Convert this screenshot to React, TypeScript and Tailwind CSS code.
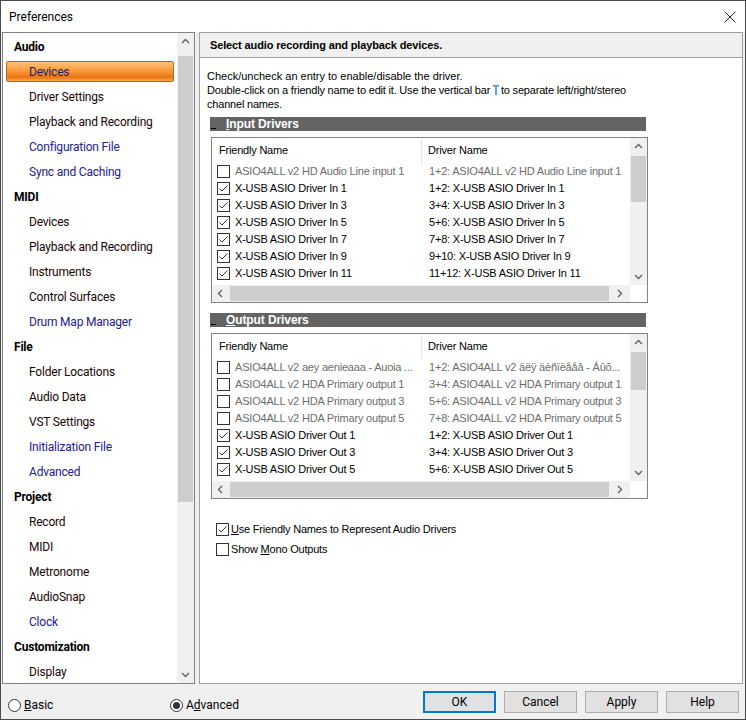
import React from 'react';

type TreeItem = { t: string; h?: boolean; sel?: boolean; blue?: boolean };
type Row = { c: boolean; g?: boolean; f: string; d: string };

const tree: TreeItem[] = [
  { t: 'Audio', h: true },
  { t: 'Devices', sel: true },
  { t: 'Driver Settings' },
  { t: 'Playback and Recording' },
  { t: 'Configuration File', blue: true },
  { t: 'Sync and Caching', blue: true },
  { t: 'MIDI', h: true },
  { t: 'Devices' },
  { t: 'Playback and Recording' },
  { t: 'Instruments' },
  { t: 'Control Surfaces' },
  { t: 'Drum Map Manager', blue: true },
  { t: 'File', h: true },
  { t: 'Folder Locations' },
  { t: 'Audio Data' },
  { t: 'VST Settings' },
  { t: 'Initialization File', blue: true },
  { t: 'Advanced', blue: true },
  { t: 'Project', h: true },
  { t: 'Record' },
  { t: 'MIDI' },
  { t: 'Metronome' },
  { t: 'AudioSnap' },
  { t: 'Clock', blue: true },
  { t: 'Customization', h: true },
  { t: 'Display' },
];

const inputRows: Row[] = [
  { c: false, g: true, f: 'ASIO4ALL v2 HD Audio Line input 1', d: '1+2: ASIO4ALL v2 HD Audio Line input 1' },
  { c: true, f: 'X-USB ASIO Driver In 1', d: '1+2: X-USB ASIO Driver In 1' },
  { c: true, f: 'X-USB ASIO Driver In 3', d: '3+4: X-USB ASIO Driver In 3' },
  { c: true, f: 'X-USB ASIO Driver In 5', d: '5+6: X-USB ASIO Driver In 5' },
  { c: true, f: 'X-USB ASIO Driver In 7', d: '7+8: X-USB ASIO Driver In 7' },
  { c: true, f: 'X-USB ASIO Driver In 9', d: '9+10: X-USB ASIO Driver In 9' },
  { c: true, f: 'X-USB ASIO Driver In 11', d: '11+12: X-USB ASIO Driver In 11' },
];

const outputRows: Row[] = [
  { c: false, g: true, f: 'ASIO4ALL v2 aey aenieaaa - Auoia ...', d: '1+2: ASIO4ALL v2 äëÿ äèñïëååâ - Âûõ...' },
  { c: false, g: true, f: 'ASIO4ALL v2 HDA Primary output 1', d: '3+4: ASIO4ALL v2 HDA Primary output 1' },
  { c: false, g: true, f: 'ASIO4ALL v2 HDA Primary output 3', d: '5+6: ASIO4ALL v2 HDA Primary output 3' },
  { c: false, g: true, f: 'ASIO4ALL v2 HDA Primary output 5', d: '7+8: ASIO4ALL v2 HDA Primary output 5' },
  { c: true, f: 'X-USB ASIO Driver Out 1', d: '1+2: X-USB ASIO Driver Out 1' },
  { c: true, f: 'X-USB ASIO Driver Out 3', d: '3+4: X-USB ASIO Driver Out 3' },
  { c: true, f: 'X-USB ASIO Driver Out 5', d: '5+6: X-USB ASIO Driver Out 5' },
];

const Chevron = ({ dir }: { dir: 'up' | 'down' | 'left' | 'right' }) => {
  const pts = {
    up: '1,6 4.5,2.5 8,6',
    down: '1,3 4.5,6.5 8,3',
    left: '6,1 2.5,4.5 6,8',
    right: '3,1 6.5,4.5 3,8',
  }[dir];
  return (
    <svg width="9" height="9" viewBox="0 0 9 9">
      <polyline points={pts} fill="none" stroke="#606060" strokeWidth="1.3" />
    </svg>
  );
};

const Check = ({ on }: { on: boolean }) => (
  <span className="w-[13px] h-[13px] border border-[#333333] bg-white flex items-center justify-center shrink-0">
    {on && (
      <svg width="11" height="11" viewBox="0 0 11 11">
        <polyline points="1.5,5.5 4,8 9.5,2.5" fill="none" stroke="#333333" strokeWidth="1" />
      </svg>
    )}
  </span>
);

const Radio = ({ on }: { on: boolean }) => (
  <span className="w-[13px] h-[13px] rounded-full border border-[#333333] bg-white flex items-center justify-center shrink-0">
    {on && <span className="w-[7px] h-[7px] rounded-full bg-[#333333]" />}
  </span>
);

const SectionBar = ({ first, rest }: { first: string; rest: string }) => (
  <div className="ml-[10px] w-[436px] h-[14px] bg-[#646464] flex items-end shrink-0">
    <span className="w-[5px] h-[1px] bg-black mb-[2px] ml-[1px]" />
    <span className="ml-[10px] self-center text-white font-bold text-[12px] leading-[14px] tracking-[-0.1px]">
      <span className="underline underline-offset-[1px]">{first}</span>
      {rest}
    </span>
  </div>
);

const DriverList = ({ rows, thumbH }: { rows: Row[]; thumbH: number }) => (
  <div className="ml-[11px] w-[437px] h-[166px] border border-[#828282] bg-white flex flex-col shrink-0 tracking-[-0.2px]">
    <div className="flex h-[147px]">
      <div className="w-[418px] flex flex-col overflow-hidden">
        <div className="h-[25px] flex items-center shrink-0">
          <div className="w-[210px] pl-[7px] h-[24px] border-r border-[#e5e5e5] flex items-center">Friendly Name</div>
          <div className="pl-[6px]">Driver Name</div>
        </div>
        {rows.map((r, i) => (
          <div key={i} className="h-[17px] flex items-center shrink-0">
            <div className="w-[210px] pl-[5px] flex items-center gap-[5px] overflow-hidden whitespace-nowrap">
              <Check on={r.c} />
              <span className={r.g ? 'text-[#6d6d6d]' : 'text-black'}>{r.f}</span>
            </div>
            <div className={`pl-[7px] whitespace-nowrap ${r.g ? 'text-[#6d6d6d]' : 'text-black'}`}>{r.d}</div>
          </div>
        ))}
      </div>
      <div className="w-[17px] bg-[#f0f0f0] flex flex-col items-center">
        <div className="h-[17px] flex items-center justify-center"><Chevron dir="up" /></div>
        <div className="mt-[1px] w-[15px] bg-[#cdcdcd]" style={{ height: thumbH }} />
        <div className="flex-1" />
        <div className="h-[17px] flex items-center justify-center"><Chevron dir="down" /></div>
      </div>
    </div>
    <div className="flex h-[17px]">
      <div className="w-[418px] bg-[#f0f0f0] flex items-center">
        <div className="w-[17px] flex items-center justify-center"><Chevron dir="left" /></div>
        <div className="ml-[1px] w-[379px] h-[15px] bg-[#cdcdcd]" />
        <div className="flex-1 flex items-center justify-center"><Chevron dir="right" /></div>
      </div>
      <div className="w-[17px] bg-white" />
    </div>
  </div>
);

const App: React.FC = () => {
  return (
    <div className="w-[746px] h-[720px] bg-[#f0f0f0] border border-[#4a4a4a] flex flex-col overflow-hidden font-['Liberation_Sans',Arial,sans-serif] text-[11px] text-black">
      {/* Title bar */}
      <div className="h-[31px] bg-white flex items-center justify-between pl-[8px] pr-[9px] shrink-0">
        <span className="font-['Roboto',sans-serif] text-[12px]">Preferences</span>
        <svg width="12" height="12" viewBox="0 0 12 12">
          <path d="M0.5 0.5 L11.5 11.5 M11.5 0.5 L0.5 11.5" stroke="#222" strokeWidth="1" />
        </svg>
      </div>

      {/* Main */}
      <div className="flex h-[652px] pl-[1px] shrink-0">
        {/* Tree */}
        <div className="w-[193px] h-full border border-[#828282] bg-white flex">
          <div className="w-[174px] pt-[1px] overflow-hidden font-['Roboto',sans-serif] text-[12px] tracking-[-0.2px]">
            {tree.map((it, i) =>
              it.h ? (
                <div key={i} className="h-[25px] flex items-center pl-[11px] font-bold">{it.t}</div>
              ) : it.sel ? (
                <div key={i} className="h-[25px] pt-[2px] px-[3px]">
                  <div className="h-[21px] rounded-[2px] border border-[#b06a26] bg-[linear-gradient(to_bottom,#fcc17c,#f99a3c_45%,#ec7414_80%,#ffa64a)] flex items-center pl-[22px] text-[#1e1e70]">
                    {it.t}
                  </div>
                </div>
              ) : (
                <div key={i} className={`h-[25px] flex items-center pl-[26px] ${it.blue ? 'text-[#22208c]' : 'text-[#1a0505]'}`}>{it.t}</div>
              )
            )}
          </div>
          <div className="w-[17px] bg-[#f0f0f0] flex flex-col items-center">
            <div className="h-[17px] flex items-center justify-center"><Chevron dir="up" /></div>
            <div className="mt-[6px] w-[15px] h-[446px] bg-[#cdcdcd]" />
            <div className="flex-1" />
            <div className="h-[17px] flex items-center justify-center"><Chevron dir="down" /></div>
          </div>
        </div>

        {/* Right panel */}
        <div className="ml-[4px] w-[544px] h-full border border-[#a0a0a0] bg-white flex flex-col">
          <div className="h-[25px] bg-[#f0f0f0] border-b border-[#a0a0a0] flex items-center pl-[10px] font-bold tracking-[-0.13px] shrink-0">
            Select audio recording and playback devices.
          </div>
          <div className="mt-[11px] pl-[7px] leading-[14px]">
            <div>Check/uncheck an entry to enable/disable the driver.</div>
            <div className="flex items-center whitespace-nowrap tracking-[-0.2px]">
              Double-click on a friendly name to edit it. Use the vertical bar&nbsp;
              <svg width="6" height="10" viewBox="0 0 6 10" className="mr-[2px]">
                <rect x="0" y="0" width="6" height="1.5" fill="#3b8ad6" />
                <rect x="2" y="0" width="2" height="10" fill="#5aa6ea" />
              </svg>
              to separate left/right/stereo
            </div>
            <div className="tracking-[-0.2px]">channel names.</div>
          </div>

          <div className="mt-[6px]">
            <SectionBar first="I" rest="nput Drivers" />
          </div>
          <div className="mt-[6px]">
            <DriverList rows={inputRows} thumbH={46} />
          </div>
          <div className="mt-[10px]">
            <SectionBar first="O" rest="utput Drivers" />
          </div>
          <div className="mt-[6px]">
            <DriverList rows={outputRows} thumbH={38} />
          </div>

          <div className="mt-[23px] pl-[16px] flex flex-col gap-[6px] leading-[14px] tracking-[-0.2px]">
            <div className="flex items-center gap-[2px]">
              <Check on={true} />
              <span><span className="underline underline-offset-[1px]">U</span>se Friendly Names to Represent Audio Drivers</span>
            </div>
            <div className="flex items-center gap-[2px]">
              <Check on={false} />
              <span>Show <span className="underline underline-offset-[1px]">M</span>ono Outputs</span>
            </div>
          </div>
        </div>
      </div>

      {/* Bottom bar */}
      <div className="flex-1 flex items-start pl-[7px] pr-[6px]">
        <div className="w-[162px] mt-[14px] flex items-center gap-[3px] font-['Roboto',sans-serif] text-[12px] leading-[14px]">
          <Radio on={false} />
          <span><span className="underline underline-offset-[1px]">B</span>asic</span>
        </div>
        <div className="mt-[14px] flex items-center gap-[3px] font-['Roboto',sans-serif] text-[12px] leading-[14px]">
          <Radio on={true} />
          <span>A<span className="underline underline-offset-[1px]">d</span>vanced</span>
        </div>
        <div className="ml-auto mt-[7px] flex gap-[8px] font-['Roboto',sans-serif] text-[12px]">
          <button className="w-[73px] h-[22px] border-2 border-[#0078d7] bg-[#e1e1e1]">OK</button>
          <button className="w-[73px] h-[22px] border border-[#adadad] bg-[#e1e1e1]">Cancel</button>
          <button className="w-[73px] h-[22px] border border-[#adadad] bg-[#e1e1e1]">Apply</button>
          <button className="w-[73px] h-[22px] border border-[#adadad] bg-[#e1e1e1]">Help</button>
        </div>
      </div>
    </div>
  );
};

export default App;
